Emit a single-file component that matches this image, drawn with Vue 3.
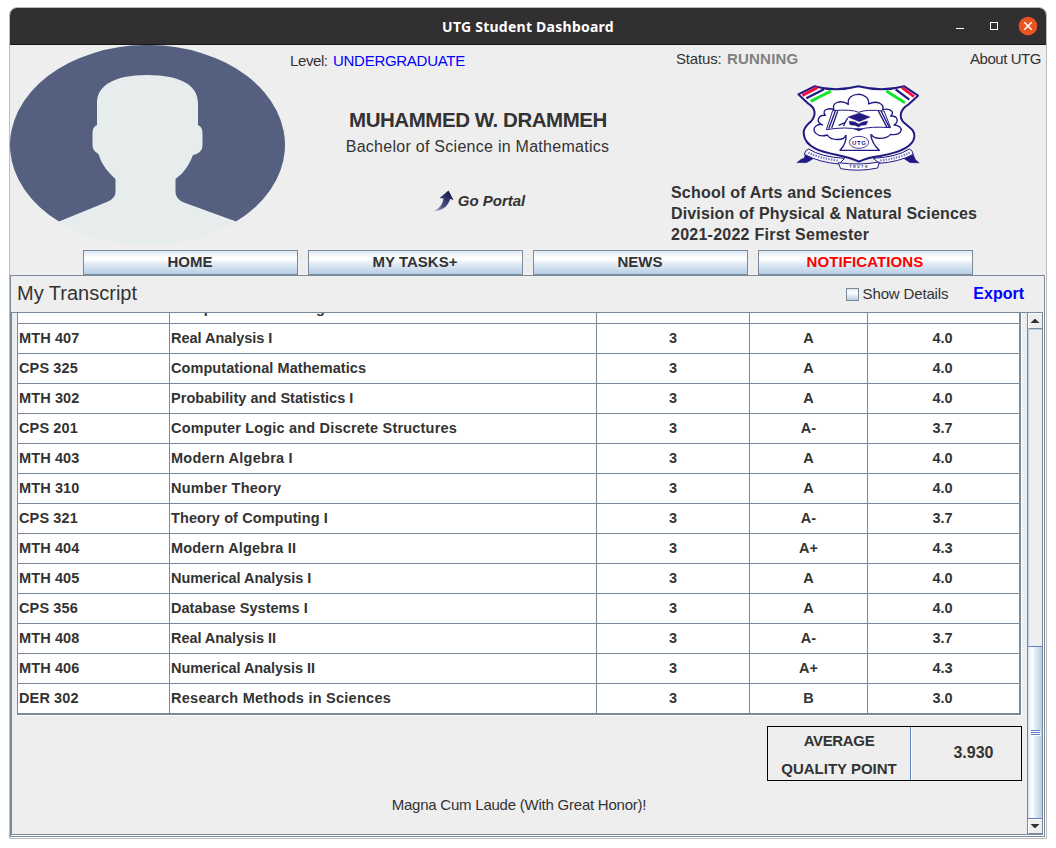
<script setup>
// Each row: cells followed by the tracking of the course title, in px.
const rows = [
  { cells: ['CPS 402', 'Computer Networking', '3', 'A', '4.0'], track: 0.14 },
  { cells: ['MTH 407', 'Real Analysis I', '3', 'A', '4.0'], track: -0.03 },
  { cells: ['CPS 325', 'Computational Mathematics', '3', 'A', '4.0'], track: 0.07 },
  { cells: ['MTH 302', 'Probability and Statistics I', '3', 'A', '4.0'], track: 0.04 },
  { cells: ['CPS 201', 'Computer Logic and Discrete Structures', '3', 'A-', '3.7'], track: 0.19 },
  { cells: ['MTH 403', 'Modern Algebra I', '3', 'A', '4.0'], track: 0.25 },
  { cells: ['MTH 310', 'Number Theory', '3', 'A', '4.0'], track: 0.25 },
  { cells: ['CPS 321', 'Theory of Computing I', '3', 'A-', '3.7'], track: 0.11 },
  { cells: ['MTH 404', 'Modern Algebra II', '3', 'A+', '4.3'], track: 0.19 },
  { cells: ['MTH 405', 'Numerical Analysis I', '3', 'A', '4.0'], track: -0.06 },
  { cells: ['CPS 356', 'Database Systems I', '3', 'A', '4.0'], track: 0.03 },
  { cells: ['MTH 408', 'Real Analysis II', '3', 'A-', '3.7'], track: -0.05 },
  { cells: ['MTH 406', 'Numerical Analysis II', '3', 'A+', '4.3'], track: -0.07 },
  { cells: ['DER 302', 'Research Methods in Sciences', '3', 'B', '3.0'], track: 0.26 },
]
const tabs = [
  { label: 'HOME' },
  { label: 'MY TASKS+' },
  { label: 'NEWS' },
  { label: 'NOTIFICATIONS', alert: true },
]
</script>

<template>
  <div class="window">
    <div class="titlebar">
      <span class="title">UTG Student Dashboard</span>
      <svg class="controls" width="90" height="36" viewBox="0 0 90 36">
        <path d="M1 20.5h8" stroke="#fff" fill="none" />
        <rect x="35.5" y="14.5" width="7" height="7" stroke="#fff" fill="none" />
        <circle cx="73" cy="18" r="9.3" fill="#e95420" />
        <path d="M69.3 14.3l7.4 7.4M76.7 14.3l-7.4 7.4" stroke="#fff" stroke-width="1.5" fill="none" />
      </svg>
    </div>

    <header class="header">
      <svg class="avatar" width="275" height="200" viewBox="0 0 275 200">
        <path d="M49 176.500A137.500 100 0 1 1 226 176.500L137 150Z" fill="#556080" />
        <path d="M87 58C87 41 103 30 137 30C172 30 188 41 188 58V80Q192.500 82 192.500 88V100Q192.500 108 183 110C178 123 172 129 165.500 134V147Q165.500 154 174 157.500L226 176.500A137.500 100 0 0 1 49 176.500L98 156.500Q105.500 153 105.500 147V134C99 128 92 121 88.500 109Q82.500 106 82.500 100V88Q82.500 82 87 80Z" fill="#e7eced" />
      </svg>

      <div class="person">
        <div class="level"><span class="lv">Level:</span><span class="blue">UNDERGRADUATE</span></div>
        <div class="name">MUHAMMED W. DRAMMEH</div>
        <div class="degree">Bachelor of Science in Mathematics</div>
        <div class="portal">
          <svg width="22" height="22" viewBox="0 0 22 22">
            <defs><linearGradient id="arrow" x1="0" y1="1" x2=".8" y2=".2"><stop offset="0" stop-color="#c4c9dc" /><stop offset=".45" stop-color="#4a5284" /><stop offset="1" stop-color="#1c1f52" /></linearGradient></defs>
            <path d="M0 21.500C6 19 10 14 10.500 8.500L6.500 8L15.500 .5L20.500 10L17 9C15.500 16 9 21 0 21.500Z" fill="url(#arrow)" />
          </svg>
          <span>Go Portal</span>
        </div>
      </div>

      <div class="study">
        <div class="status"><span class="st-label">Status:</span><b>RUNNING</b><span class="about">About UTG</span></div>
        <svg class="crest" width="126" height="88" viewBox="45 27 378 264">
          <g stroke="#211a82" fill="none" stroke-linejoin="round">
            <path d="M103 34Q165 52 235 34Q305 52 373 34L414 62L386 88C360 103 354 128 374 145C392 160 404 165 403 185C400 222 340 236 300 243Q260 248 237 260Q212 248 172 240C125 230 74 218 71 175C70 157 84 148 93 139C108 122 109 100 85 86L55 58Z" fill="#fff" stroke-width="6" />
            <path d="M67 61L112 38" stroke="#f20c42" stroke-width="9" />
            <path d="M79 70L132 43" stroke-width="7" />
            <path d="M92 79L153 48" stroke="#12e62a" stroke-width="9" />
            <path d="M402 65L366 38" stroke="#f20c42" stroke-width="9" />
            <path d="M388 74L347 43" stroke-width="7" />
            <path d="M375 83L319 48" stroke="#12e62a" stroke-width="9" />
            <path d="M198 180C194 198 152 198 142 180C110 190 92 164 108 153Q120 144 128 150C104 140 116 119 136 121C122 103 150 98 162 104C152 84 182 72 205 88C198 48 270 48 266 87C290 74 314 88 308 104C334 98 345 114 332 123C356 122 356 142 342 150C374 152 370 184 332 178C318 194 280 194 274 178" stroke-width="4" />
            <path d="M198 180Q200 205 180 226H298Q276 206 272 178" fill="#fff" stroke-width="4" />
            <path d="M158 107Q215 102 236 112Q258 102 312 108L332 158Q270 153 237 164Q200 154 139 164Z" fill="#fff" stroke-width="3" />
            <path d="M166 108L146 161M173 109L155 159M295 108L321 157M303 108L328 157" stroke-width="4" />
            <path d="M203 126L238 114L271 126L238 140Z" fill="#211a82" />
            <path d="M207 139Q225 137 236 147Q250 137 264 139L258 150Q242 149 236 156Q225 149 210 150Z" fill="#211a82" />
            <path d="M222 162Q237 158 249 162L237 168Z" fill="#211a82" />
            <path d="M203 129L195 143L176 151M196 140L191 153" stroke-width="4" />
            <ellipse cx="237" cy="202" rx="29" ry="18" fill="#fff" stroke-width="2.500" />
            <path d="M76 237L100 251L80 263H50L64 252L72 250ZM399 237L372 251L390 263L418 264L407 254Z" fill="#211a82" />
            <path d="M86 222Q122 246 194 250L177 267Q117 262 73 238Q76 224 86 222ZM388 222Q352 246 280 250L297 265Q357 261 400 238Q397 224 388 222Z" fill="#f7f7fd" stroke-width="3" />
            <path d="M85 233Q122 251 176 257M389 233Q352 251 299 257" stroke-width="6" stroke-dasharray="4 4" opacity=".6" />
            <path d="M175 263Q237 272 298 261L293 279Q237 291 182 281Z" fill="#fff" stroke-width="3" />
          </g>
          <text x="238" y="209" class="crest-utg" text-anchor="middle">UTG</text>
          <text x="238" y="280" class="crest-motto" text-anchor="middle">TRUTH</text>
        </svg>
        <div class="school">
          <div class="l1">School of Arts and Sciences</div>
          <div class="l2">Division of Physical &amp; Natural Sciences</div>
          <div class="l3">2021-2022 First Semester</div>
        </div>
      </div>
    </header>

    <nav class="tabs">
      <div v-for="t in tabs" :key="t.label" class="tab" :class="{ alert: t.alert }">{{ t.label }}</div>
    </nav>

    <section class="panel">
      <div class="panel-head">
        <span class="heading">My Transcript</span>
        <span class="check"></span>
        <span class="details">Show Details</span>
        <span class="export">Export</span>
      </div>
      <div class="scrollpane">
        <div class="viewport">
          <div class="table">
            <div v-for="r in rows" :key="r.cells[0]" class="row">
              <span v-for="(c, i) in r.cells" :key="i" class="cell" :style="i === 1 ? { letterSpacing: r.track + 'px' } : null">{{ c }}</span>
            </div>
          </div>
          <div class="gpa">
            <div class="gpa-label"><span class="g1">AVERAGE</span><span class="g2">QUALITY POINT</span></div>
            <div class="gpa-value">3.930</div>
          </div>
          <div class="honor"><span>Magna Cum Laude (With Great Honor)!</span></div>
        </div>
        <div class="scrollbar">
          <div class="arrow"><svg width="14" height="15"><path d="M2.500 9h9L7.500 5h-1z" fill="#333" /></svg></div>
          <div class="track"></div>
          <div class="thumb"><i></i><i></i><i></i></div>
          <div class="arrow down"><svg width="14" height="14"><path d="M2.500 4h9L7.500 8h-1z" fill="#333" /></svg></div>
        </div>
      </div>
    </section>
  </div>
</template>

<style>
body { background: #fff; }
</style>

<style scoped>
* { box-sizing: border-box; }
.window {
  width: 1038px; height: 832px; margin: 7px 0 0 9px;
  border: 1px solid #bcbcbc; border-radius: 8px 8px 0 0;
  background: #eee; overflow: hidden; color: #333;
  font-family: "Liberation Sans", Arial, sans-serif; white-space: nowrap;
}
.titlebar {
  height: 37px; background: #322f30; border-bottom: 1px solid #191818;
  display: flex; align-items: center; justify-content: center; position: relative;
}
.title { color: #fff; font: bold 14px "Noto Sans", sans-serif; letter-spacing: .25px; }
.controls { position: absolute; right: 1px; top: 0; }
.header { height: 205px; display: grid; grid-template-columns: 275px 386px 375px; }
.person { display: flex; flex-direction: column; }
.level { margin: 6px 0 0 5px; font-size: 15px; line-height: 20px; display: flex; }
.lv { width: 43px; letter-spacing: -.4px; }
.blue { color: #00f; letter-spacing: -.28px; }
.name { margin-top: 37px; text-align: center; font-weight: bold; font-size: 20.5px; letter-spacing: -.45px; line-height: 24px; }
.degree { margin-top: 5px; padding-right: 1px; text-align: center; font-size: 16px; letter-spacing: .27px; line-height: 20px; }
.portal { margin: 33px 0 0 2px; display: flex; justify-content: center; align-items: center; gap: 3px; font: italic bold 15px/22px "Liberation Sans", sans-serif; }
.study { display: flex; flex-direction: column; }
.status { margin: 4px 0 0 5px; font-size: 15px; line-height: 20px; display: flex; }
.st-label { width: 51px; letter-spacing: -.15px; }
.status b { color: #808080; letter-spacing: .2px; }
.about { margin-left: auto; margin-right: 5px; letter-spacing: -.45px; }
.crest { margin: 15px 0 0 124px; }
.crest-utg { font: bold 18px "Liberation Sans", sans-serif; fill: #211a82; letter-spacing: 2px; }
.crest-motto { font: bold 10px "Liberation Sans", sans-serif; fill: #211a82; letter-spacing: 5px; }
.school { margin-top: 10px; font-weight: bold; font-size: 16px; line-height: 21px; }
.l1 { letter-spacing: .2px; }
.l2 { letter-spacing: .14px; }
.l3 { letter-spacing: .25px; }
.tabs { display: flex; gap: 10px; margin-left: 73px; height: 25px; }
.tab {
  width: 215px; height: 25px; border: 1px solid #7a8a99; text-align: center; padding-right: 1px;
  font-weight: bold; font-size: 15px; line-height: 21px;
  background: linear-gradient(#dde8f3, #fff 30%, #fff 35%, #dde8f3 60%, #b8cfe5);
}
.alert { color: #f00; letter-spacing: .1px; }
.panel {
  height: 562px; width: 1035px; border: 1px solid #7a8a99;
  box-shadow: 0 1px #fff, 1px 0 #fff;
}
.panel-head { height: 36px; display: flex; align-items: center; padding: 0 20px 0 6px; }
.heading { font-size: 20px; margin-right: auto; line-height: 24px; padding-bottom: 2px; }
.check { width: 13px; height: 13px; border: 1px solid #7a8a99; background: linear-gradient(#dde8f3, #fff 35%, #b8cfe5); }
.details { font-size: 15px; margin: 0 25px 0 4px; letter-spacing: -.15px; line-height: 18px; }
.export { font-size: 16px; font-weight: bold; color: #00f; }
.scrollpane { height: 523px; width: 1032px; border: 1px solid #7a8a99; box-shadow: 1px 1px #fff; display: flex; }
.viewport { width: 1015px; height: 521px; overflow: hidden; padding-left: 5px; }
.table { width: 1004px; margin-top: -20px; border: solid #7a8a99; border-width: 1px 2px 2px 1px; background: #fff; box-shadow: 1px 1px #fff; }
.row { display: grid; grid-template-columns: 152px 427px 153px 118px 151px; height: 30px; border-bottom: 1px solid #7a8a99; font-weight: bold; font-size: 14.5px; line-height: 29px; }
.row:last-child { border-bottom: 0; height: 29px; }
.cell { border-right: 1px solid #7a8a99; text-align: center; }
.cell:nth-child(-n+2) { text-align: left; padding-left: 1px; }
.cell:first-child { letter-spacing: .12px; }
.cell:last-child { border-right: 0; padding-right: 2px; }
.gpa { display: flex; margin: 11px 0 0 750px; width: 255px; height: 55px; border: 1px solid #000; font-weight: bold; }
.gpa-label { width: 143px; border-right: 1px solid #6382bf; display: flex; flex-direction: column; align-items: center; font-size: 15px; line-height: 28px; }
.g1 { letter-spacing: -.35px; }
.gpa-value { flex: 1; border-left: 1px solid #fff; padding-left: 14px; text-align: center; font-size: 16px; line-height: 51px; }
.honor { margin-top: 14px; padding-right: 6px; text-align: center; font-size: 15px; letter-spacing: -.23px; line-height: 20px; }
.scrollbar { width: 15px; border-left: 1px solid #7a8a99; display: flex; flex-direction: column; }
.arrow { height: 16px; border-bottom: 1px solid #7a8a99; border-top: 1px solid #fff; border-left: 1px solid #fff; overflow: hidden; }
.arrow svg { display: block; margin-left: -1px; }
.track { height: 317px; border: solid #b8cfe5; border-width: 1px 0 0 1px; }
.thumb {
  height: 173px; margin-left: -1px; border: 1px solid #6382bf; border-right: 0;
  background: linear-gradient(90deg, #dde8f3, #fff 30%, #dde8f3 55%, #b8cfe5);
  display: flex; flex-direction: column; justify-content: center; align-items: center; gap: 1px;
}
.thumb i { width: 9px; height: 1px; background: #6382bf; box-shadow: 1px 1px #fff; }
.down { height: 15px; }
</style>
